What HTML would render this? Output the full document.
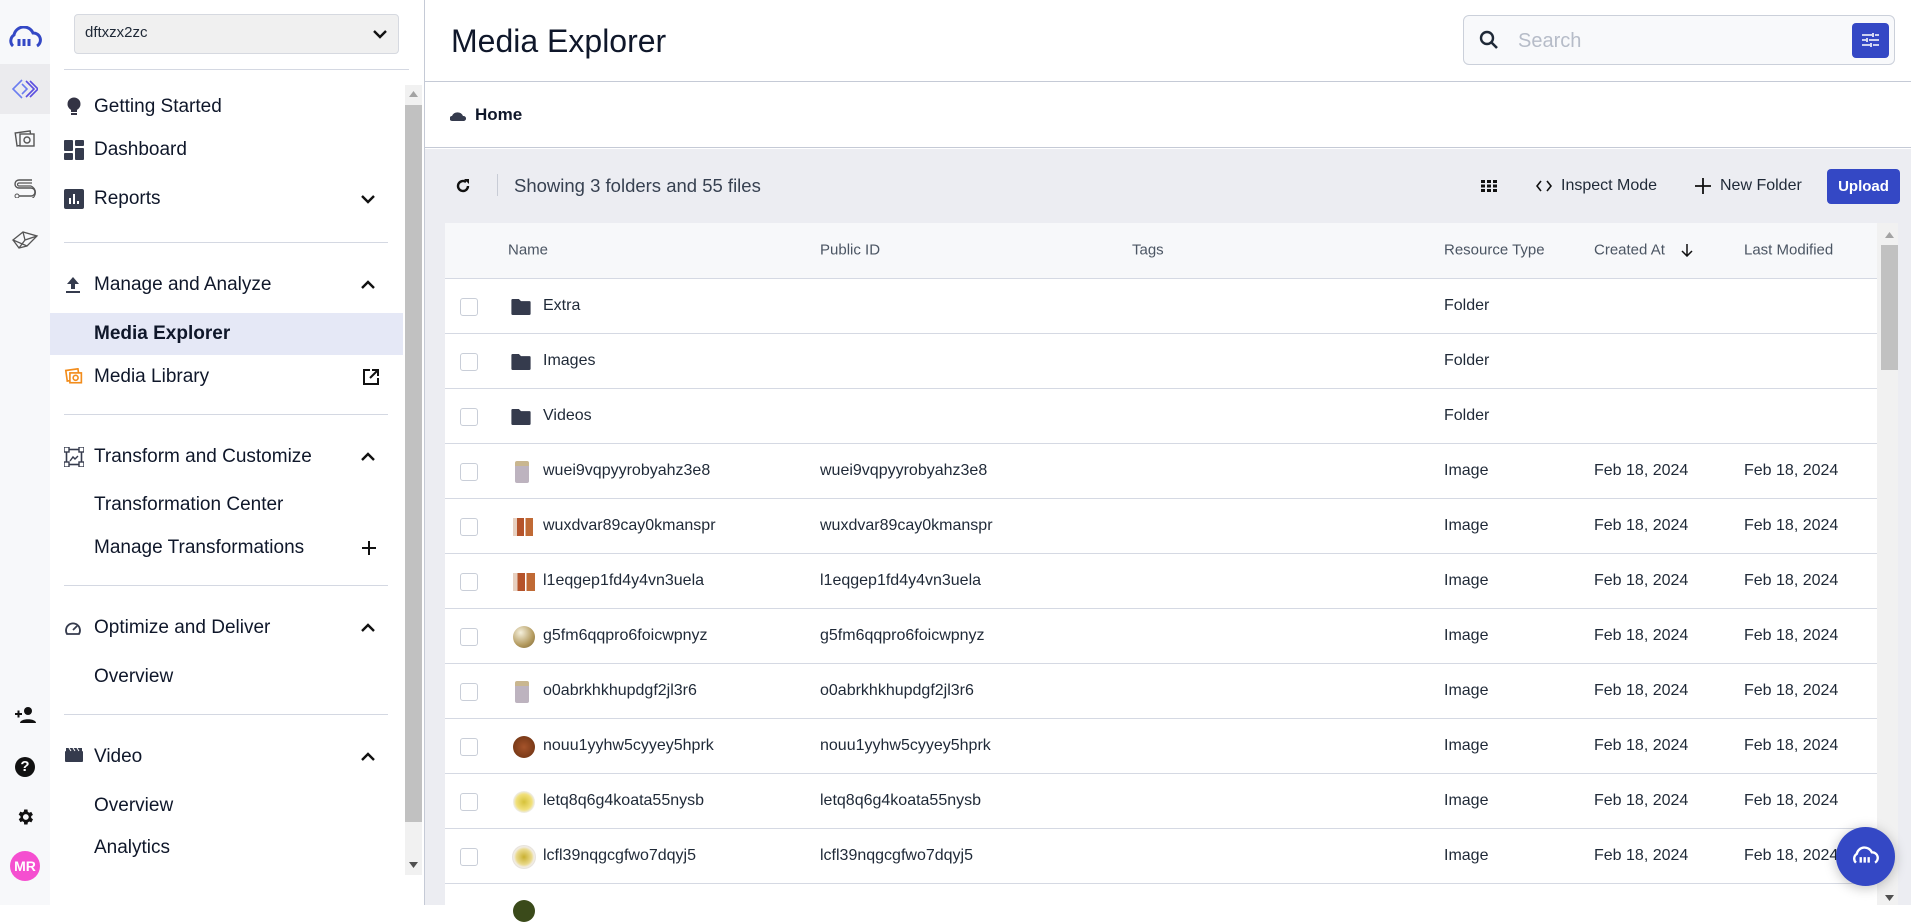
<!DOCTYPE html>
<html><head><meta charset="utf-8"><style>
*{box-sizing:border-box;margin:0;padding:0}
body{width:1911px;height:905px;overflow:hidden;font-family:"Liberation Sans",sans-serif;color:#111827;background:#fff;position:relative}
.a{position:absolute}
.rail{left:0;top:0;width:50px;height:905px;background:#f7f8fa}
.side{left:50px;top:0;width:374px;height:905px;background:#fff}
.si{position:absolute;left:94px;font-size:19px;color:#0f172a;transform:translateY(-50%)}
.ic{position:absolute;left:64px;transform:translateY(-50%)}
.chev{position:absolute;left:360px;transform:translateY(-50%)}
.div{position:absolute;left:64px;width:324px;height:1px;background:#d4d8e2}
.th{position:absolute;top:250px;transform:translateY(-50%);font-size:15px;color:#4b5563}
.row{position:absolute;left:445px;width:1432px;height:55px;border-bottom:1px solid #d5d9e3;background:#fff}
.row span{position:absolute;top:50%;transform:translateY(-50%);font-size:16px;color:#1f2937;white-space:nowrap}
.cb{position:absolute;left:15px;top:19px;width:18px;height:18px;border:1px solid #c9ced8;border-radius:3px;background:#fff}
.fi{position:absolute;left:66px;top:20px}
</style></head><body>

<div class="a rail">
  <svg class="a" style="left:8px;top:26px" width="34" height="22" viewBox="0 0 34 22"><path d="M5 20 A7 7 0 0 1 6 9 A10 10 0 0 1 25 7 A7 7 0 0 1 29 20" fill="none" stroke="#3448c5" stroke-width="3"/><path d="M11 20v-7M16 20v-7M21 20v-7" stroke="#3448c5" stroke-width="3"/></svg>
  <div class="a" style="left:0;top:64px;width:50px;height:50px;background:#ebebee"></div>
  <svg class="a" style="left:12px;top:78px" width="26" height="22" viewBox="0 0 26 22"><path d="M10 2 L1 11 L10 20 M10 6 L15 11 L10 16" fill="none" stroke="#6b7df0" stroke-width="1.6"/><path d="M14 3 L22 11 L14 19 M18 3 L26 11 L18 19" fill="none" stroke="#5b4ee0" stroke-width="1.6"/></svg>
  <svg class="a" style="left:13px;top:128px" width="24" height="22" viewBox="0 0 24 22"><rect x="3" y="4" width="15" height="13" fill="none" stroke="#555" stroke-width="1.4" transform="rotate(-8 10 10)"/><rect x="7" y="6" width="14" height="12" fill="#f7f8fa" stroke="#555" stroke-width="1.4"/><circle cx="14" cy="12" r="3" fill="none" stroke="#555" stroke-width="1.4"/></svg>
  <svg class="a" style="left:12px;top:178px" width="26" height="20" viewBox="0 0 26 20"><path d="M20 2H7a4 4 0 0 0 0 8h12a4 4 0 0 1 0 8H7" fill="none" stroke="#555" stroke-width="1.4"/><path d="M20 5H7a1.5 1.5 0 0 0 0 3h12a7 7 0 0 1 0 13" fill="none" stroke="#555" stroke-width="1.2"/><circle cx="5" cy="18" r="2" fill="none" stroke="#555"/></svg>
  <svg class="a" style="left:11px;top:228px" width="28" height="22" viewBox="0 0 28 22"><path d="M2 12 L12 4 L26 8 L16 18 Z M2 12 L8 20 L16 18 M12 4 L14 12 L26 8 M14 12 L8 20" fill="none" stroke="#555" stroke-width="1.3"/></svg>
  <svg class="a" style="left:14px;top:706px" width="22" height="18" viewBox="0 0 22 18"><circle cx="14" cy="5" r="4" fill="#111"/><path d="M6 17c0-5 16-5 16 0z" fill="#111"/><path d="M1 8h7M4.5 4.5v7" stroke="#111" stroke-width="2"/></svg>
  <div class="a" style="left:15px;top:757px;width:20px;height:20px;border-radius:50%;background:#111;color:#fff;font-weight:bold;font-size:15px;text-align:center;line-height:20px">?</div>
  <svg class="a" style="left:15px;top:807px" width="20" height="20" viewBox="0 0 24 24"><path fill="#111" d="M19.4 13a7.5 7.5 0 0 0 0-2l2.1-1.6-2-3.5-2.5 1a7 7 0 0 0-1.7-1L15 3h-4l-.4 2.6a7 7 0 0 0-1.7 1l-2.5-1-2 3.5L6.6 11a7.5 7.5 0 0 0 0 2l-2.1 1.6 2 3.5 2.5-1a7 7 0 0 0 1.7 1L11 21h4l.4-2.6a7 7 0 0 0 1.7-1l2.5 1 2-3.5zM13 15.5a3.5 3.5 0 1 1 0-7 3.5 3.5 0 0 1 0 7z"/></svg>
  <div class="a" style="left:10px;top:851px;width:30px;height:30px;border-radius:50%;background:#f54fd0;color:#fff;font-weight:bold;font-size:14px;text-align:center;line-height:30px">MR</div>
</div>

<div class="a side">
  <div class="a" style="left:24px;top:14px;width:325px;height:40px;background:#f0f0f0;border:1px solid #d6d9e0;border-radius:4px"></div>
  <div class="a" style="left:35px;top:24px;font-size:15px;color:#1f2937">dftxzx2zc</div>
  <svg class="a" style="left:322px;top:29px" width="16" height="10" viewBox="0 0 16 10"><path d="M2 2l6 6 6-6" fill="none" stroke="#111" stroke-width="2.4"/></svg>
  <div class="a" style="left:14px;top:69px;width:345px;height:1px;background:#d4d8e2"></div>
  <div class="a" style="left:355px;top:85px;width:17px;height:790px;background:#f1f1f1"></div>
  <div class="a" style="left:355px;top:105px;width:17px;height:717px;background:#c1c1c1"></div>
  <svg class="a" style="left:359px;top:91px" width="9" height="6"><path d="M0 6L4.5 0 9 6z" fill="#a3a3a3"/></svg>
  <svg class="a" style="left:359px;top:862px" width="9" height="6"><path d="M0 0L4.5 6 9 0z" fill="#505050"/></svg>
  <div class="a" style="left:374px;top:0;width:1px;height:905px;background:#c5cad6"></div>
</div>

<svg class="ic" style="top:107px;left:66px" width="16" height="20" viewBox="0 0 16 20"><circle cx="8" cy="7" r="6.5" fill="#334"/><rect x="5" y="12" width="6" height="3" fill="#334"/><rect x="5" y="16" width="6" height="2" fill="#334"/></svg>
<div class="si" style="top:107px">Getting Started</div>
<svg class="ic" style="top:150px" width="20" height="20" viewBox="0 0 20 20"><rect x="0" y="0" width="9" height="11" rx="1" fill="#353b4d"/><rect x="11" y="0" width="9" height="6" rx="1" fill="#353b4d"/><rect x="0" y="13" width="9" height="7" rx="1" fill="#353b4d"/><rect x="11" y="8" width="9" height="12" rx="1" fill="#353b4d"/></svg>
<div class="si" style="top:150px">Dashboard</div>
<svg class="ic" style="top:199px" width="20" height="20" viewBox="0 0 20 20"><rect width="20" height="20" rx="2" fill="#353b4d"/><path d="M6 15V9M10 15V5M14 15v-3" stroke="#fff" stroke-width="2"/></svg>
<div class="si" style="top:199px">Reports</div>
<svg class="chev" style="top:199px" width="16" height="10" viewBox="0 0 16 10"><path d="M2 2l6 6 6-6" fill="none" stroke="#111" stroke-width="2.4"/></svg>
<div class="div" style="top:242px"></div>
<svg class="ic" style="top:285px;left:66px" width="14" height="16" viewBox="0 0 14 16"><path d="M7 0L1 7h4v5h4V7h4z M0 14h14v2H0z" fill="#353b4d"/></svg>
<div class="si" style="top:285px">Manage and Analyze</div>
<svg class="chev" style="top:285px" width="16" height="10" viewBox="0 0 16 10"><path d="M2 8l6-6 6 6" fill="none" stroke="#111" stroke-width="2.4"/></svg>
<div class="a" style="left:50px;top:313px;width:353px;height:42px;background:#e5e8f6"></div>
<div class="si" style="top:334px;font-weight:bold">Media Explorer</div>
<svg class="ic" style="top:377px" width="20" height="18" viewBox="0 0 24 22"><rect x="3" y="2" width="15" height="13" fill="none" stroke="#f28c1b" stroke-width="2" transform="rotate(-8 10 10)"/><rect x="7" y="6" width="14" height="12" fill="#fff" stroke="#f28c1b" stroke-width="2"/><circle cx="14" cy="12" r="3" fill="none" stroke="#f28c1b" stroke-width="2"/></svg>
<div class="si" style="top:377px">Media Library</div>
<svg class="chev" style="top:377px;left:363px" width="16" height="16" viewBox="0 0 16 16"><path d="M7 1H1v14h14V9" fill="none" stroke="#111" stroke-width="2"/><path d="M9 1h6v6M15 1L7 9" fill="none" stroke="#111" stroke-width="2"/></svg>
<div class="div" style="top:414px"></div>
<svg class="ic" style="top:457px" width="20" height="20" viewBox="0 0 20 20"><rect x="2.5" y="2.5" width="15" height="15" fill="none" stroke="#353b4d" stroke-width="1.6"/><rect x="0" y="0" width="5" height="5" fill="#fff" stroke="#353b4d" stroke-width="1.4"/><rect x="15" y="0" width="5" height="5" fill="#fff" stroke="#353b4d" stroke-width="1.4"/><rect x="0" y="15" width="5" height="5" fill="#fff" stroke="#353b4d" stroke-width="1.4"/><rect x="15" y="15" width="5" height="5" fill="#fff" stroke="#353b4d" stroke-width="1.4"/><path d="M6 14l3-4 2 2 3-3" stroke="#353b4d" fill="none" stroke-width="1.4"/></svg>
<div class="si" style="top:457px">Transform and Customize</div>
<svg class="chev" style="top:457px" width="16" height="10" viewBox="0 0 16 10"><path d="M2 8l6-6 6 6" fill="none" stroke="#111" stroke-width="2.4"/></svg>
<div class="si" style="top:505px">Transformation Center</div>
<div class="si" style="top:548px">Manage Transformations</div>
<svg class="chev" style="top:548px;left:361px" width="16" height="16" viewBox="0 0 16 16"><path d="M8 1v14M1 8h14" stroke="#111" stroke-width="2"/></svg>
<div class="div" style="top:585px"></div>
<svg class="ic" style="top:628px" width="18" height="16" viewBox="0 0 18 16"><path d="M3 14A7 7 0 1 1 15 14Z" fill="none" stroke="#353b4d" stroke-width="1.8"/><path d="M9 10l4-4" stroke="#353b4d" stroke-width="1.8"/></svg>
<div class="si" style="top:628px">Optimize and Deliver</div>
<svg class="chev" style="top:628px" width="16" height="10" viewBox="0 0 16 10"><path d="M2 8l6-6 6 6" fill="none" stroke="#111" stroke-width="2.4"/></svg>
<div class="si" style="top:677px">Overview</div>
<div class="div" style="top:714px"></div>
<svg class="ic" style="top:755px;left:65px" width="18" height="14" viewBox="0 0 18 14"><rect y="3" width="18" height="11" rx="1" fill="#353b4d"/><path d="M1 0h16v3H1z" fill="#353b4d"/><path d="M4 0l2 3M8 0l2 3M12 0l2 3" stroke="#fff" stroke-width="1"/></svg>
<div class="si" style="top:757px">Video</div>
<svg class="chev" style="top:757px" width="16" height="10" viewBox="0 0 16 10"><path d="M2 8l6-6 6 6" fill="none" stroke="#111" stroke-width="2.4"/></svg>
<div class="si" style="top:806px">Overview</div>
<div class="si" style="top:848px">Analytics</div>

<!-- main -->
<div class="a" style="left:425px;top:0;width:1486px;height:82px;border-bottom:1px solid #c5cad6;background:#fff"></div>
<div class="a" style="left:451px;top:23px;font-size:32px;color:#0f172a">Media Explorer</div>
<div class="a" style="left:1463px;top:15px;width:432px;height:50px;border:1px solid #cbd0da;border-radius:6px;background:#f8f9fb"></div>
<svg class="a" style="left:1479px;top:30px" width="20" height="20" viewBox="0 0 20 20"><circle cx="8" cy="8" r="6" fill="none" stroke="#1f2937" stroke-width="2.4"/><path d="M12.5 12.5L18 18" stroke="#1f2937" stroke-width="2.6"/></svg>
<div class="a" style="left:1518px;top:30px;font-size:20px;color:#b6bcc8">Search</div>
<div class="a" style="left:1852px;top:23px;width:37px;height:35px;background:#3448c5;border-radius:4px"></div>
<svg class="a" style="left:1862px;top:32px" width="17" height="16" viewBox="0 0 17 16"><path d="M0 3h10M13 3h4M0 8h4M7 8h10M0 13h8M11 13h6M11 1v4M5 6v4M9 11v4" stroke="#fff" stroke-width="1.6"/></svg>
<div class="a" style="left:425px;top:83px;width:1486px;height:65px;border-bottom:1px solid #c5cad6;background:#fff"></div>
<svg class="a" style="left:450px;top:109px" width="16" height="12" viewBox="0 0 16 12"><path d="M2 12a2 2 0 0 1 0-5 6 6 0 0 1 11 0 2.5 2.5 0 0 1 1 5z" fill="#353b4d"/></svg>
<div class="a" style="left:475px;top:105px;font-size:17px;font-weight:bold;color:#0f172a">Home</div>
<div class="a" style="left:425px;top:149px;width:1486px;height:756px;background:#ecedf2"></div>
<svg class="a" style="left:455px;top:178px" width="16" height="16" viewBox="0 0 16 16"><path d="M13 8A5 5 0 1 1 11 4" fill="none" stroke="#111" stroke-width="2.4"/><path d="M9 1h5v5z" fill="#111"/></svg>
<div class="a" style="left:497px;top:174px;width:1px;height:22px;background:#c8ccd6"></div>
<div class="a" style="left:514px;top:175px;font-size:18.5px;color:#374151">Showing 3 folders and 55 files</div>
<svg class="a" style="left:1481px;top:180px" width="16" height="12" viewBox="0 0 16 12"><path d="M0 0h4v3H0zM6 0h4v3H6zM12 0h4v3h-4zM0 4.5h4v3H0zM6 4.5h4v3H6zM12 4.5h4v3h-4zM0 9h4v3H0zM6 9h4v3H6zM12 9h4v3h-4z" fill="#111"/></svg>
<svg class="a" style="left:1536px;top:180px" width="16" height="12" viewBox="0 0 16 12"><path d="M5 1L1 6l4 5M11 1l4 5-4 5" fill="none" stroke="#111" stroke-width="1.6"/></svg>
<div class="a" style="left:1561px;top:177px;font-size:16px;color:#1f2937">Inspect Mode</div>
<svg class="a" style="left:1695px;top:178px" width="16" height="16" viewBox="0 0 16 16"><path d="M8 0v16M0 8h16" stroke="#111" stroke-width="1.8"/></svg>
<div class="a" style="left:1720px;top:177px;font-size:16px;color:#1f2937">New Folder</div>
<div class="a" style="left:1827px;top:169px;width:73px;height:35px;background:#3448c5;border-radius:4px;color:#fff;font-weight:bold;font-size:15px;text-align:center;line-height:35px">Upload</div>

<div class="a" style="left:445px;top:223px;width:1432px;height:56px;background:#f7f8fa;border-bottom:1px solid #d5d9e3"></div>
<div class="th" style="left:508px">Name</div>
<div class="th" style="left:820px">Public ID</div>
<div class="th" style="left:1132px">Tags</div>
<div class="th" style="left:1444px">Resource Type</div>
<div class="th" style="left:1594px">Created At</div>
<svg class="a" style="left:1681px;top:244px" width="12" height="13" viewBox="0 0 12 13"><path d="M6 0v12M1 7l5 5 5-5" fill="none" stroke="#111" stroke-width="1.5"/></svg>
<div class="th" style="left:1744px">Last Modified</div>
<div class="a" style="left:1877px;top:223px;width:21px;height:682px;background:#f1f1f1"></div>
<div class="a" style="left:1881px;top:245px;width:17px;height:125px;background:#c1c1c1"></div>
<svg class="a" style="left:1885px;top:232px" width="9" height="6"><path d="M0 6L4.5 0 9 6z" fill="#a3a3a3"/></svg>
<svg class="a" style="left:1885px;top:895px" width="9" height="6"><path d="M0 0L4.5 6 9 0z" fill="#505050"/></svg>

<div class="row" style="top:279px"><div class="cb"></div><svg class="fi" width="20" height="16" viewBox="0 0 18 15"><path d="M0 1a1 1 0 0 1 1-1h6l2 2h8a1 1 0 0 1 1 1v11a1 1 0 0 1-1 1H1a1 1 0 0 1-1-1z" fill="#353b4d"/></svg><span style="left:98px">Extra</span><span style="left:999px">Folder</span></div>
<div class="row" style="top:334px"><div class="cb"></div><svg class="fi" width="20" height="16" viewBox="0 0 18 15"><path d="M0 1a1 1 0 0 1 1-1h6l2 2h8a1 1 0 0 1 1 1v11a1 1 0 0 1-1 1H1a1 1 0 0 1-1-1z" fill="#353b4d"/></svg><span style="left:98px">Images</span><span style="left:999px">Folder</span></div>
<div class="row" style="top:389px"><div class="cb"></div><svg class="fi" width="20" height="16" viewBox="0 0 18 15"><path d="M0 1a1 1 0 0 1 1-1h6l2 2h8a1 1 0 0 1 1 1v11a1 1 0 0 1-1 1H1a1 1 0 0 1-1-1z" fill="#353b4d"/></svg><span style="left:98px">Videos</span><span style="left:999px">Folder</span></div>

<div class="row" style="top:444px"><div class="cb"></div><div class="a" style="left:70px;top:17px;width:14px;height:22px;background:#bdb3bf;border-radius:2px;border-top:5px solid #c9b68f"></div><span style="left:98px">wuei9vqpyyrobyahz3e8</span><span style="left:375px">wuei9vqpyyrobyahz3e8</span><span style="left:999px">Image</span><span style="left:1149px">Feb 18, 2024</span><span style="left:1299px">Feb 18, 2024</span></div>
<div class="row" style="top:499px"><div class="cb"></div><div class="a" style="left:68px;top:19px;width:20px;height:18px;background:linear-gradient(90deg,#e7d0c0 0 20%,#b5532a 20% 55%,#fff 55% 62%,#c06a35 62%)"></div><span style="left:98px">wuxdvar89cay0kmanspr</span><span style="left:375px">wuxdvar89cay0kmanspr</span><span style="left:999px">Image</span><span style="left:1149px">Feb 18, 2024</span><span style="left:1299px">Feb 18, 2024</span></div>
<div class="row" style="top:554px"><div class="cb"></div><div class="a" style="left:68px;top:19px;width:22px;height:18px;background:linear-gradient(90deg,#e7d0c0 0 20%,#b5532a 20% 55%,#fff 55% 62%,#c06a35 62%)"></div><span style="left:98px">l1eqgep1fd4y4vn3uela</span><span style="left:375px">l1eqgep1fd4y4vn3uela</span><span style="left:999px">Image</span><span style="left:1149px">Feb 18, 2024</span><span style="left:1299px">Feb 18, 2024</span></div>
<div class="row" style="top:609px"><div class="cb"></div><div class="a" style="left:68px;top:17px;width:22px;height:22px;border-radius:50%;background:radial-gradient(circle at 35% 30%,#f5f0dc,#b39a5e 60%,#7a6434)"></div><span style="left:98px">g5fm6qqpro6foicwpnyz</span><span style="left:375px">g5fm6qqpro6foicwpnyz</span><span style="left:999px">Image</span><span style="left:1149px">Feb 18, 2024</span><span style="left:1299px">Feb 18, 2024</span></div>
<div class="row" style="top:664px"><div class="cb"></div><div class="a" style="left:70px;top:17px;width:14px;height:22px;background:#bdb3bf;border-radius:2px;border-top:5px solid #c9b68f"></div><span style="left:98px">o0abrkhkhupdgf2jl3r6</span><span style="left:375px">o0abrkhkhupdgf2jl3r6</span><span style="left:999px">Image</span><span style="left:1149px">Feb 18, 2024</span><span style="left:1299px">Feb 18, 2024</span></div>
<div class="row" style="top:719px"><div class="cb"></div><div class="a" style="left:68px;top:17px;width:22px;height:22px;border-radius:50%;background:radial-gradient(circle,#a5532a,#7a3a18 70%,#5a6a2a)"></div><span style="left:98px">nouu1yyhw5cyyey5hprk</span><span style="left:375px">nouu1yyhw5cyyey5hprk</span><span style="left:999px">Image</span><span style="left:1149px">Feb 18, 2024</span><span style="left:1299px">Feb 18, 2024</span></div>
<div class="row" style="top:774px"><div class="cb"></div><div class="a" style="left:68px;top:17px;width:22px;height:22px;border-radius:50%;background:radial-gradient(circle,#d6c23a,#f1e07a 50%,#eee 70%,#c44 80%,#eee)"></div><span style="left:98px">letq8q6g4koata55nysb</span><span style="left:375px">letq8q6g4koata55nysb</span><span style="left:999px">Image</span><span style="left:1149px">Feb 18, 2024</span><span style="left:1299px">Feb 18, 2024</span></div>
<div class="row" style="top:829px"><div class="cb"></div><div class="a" style="left:67px;top:16px;width:24px;height:24px;border-radius:50%;background:radial-gradient(circle,#c9b030,#e9d98a 45%,#f2ede4 60%,#bbb)"></div><span style="left:98px">lcfl39nqgcgfwo7dqyj5</span><span style="left:375px">lcfl39nqgcgfwo7dqyj5</span><span style="left:999px">Image</span><span style="left:1149px">Feb 18, 2024</span><span style="left:1299px">Feb 18, 2024</span></div>
<div class="row" style="top:884px;height:30px;border:none"><div class="a" style="left:68px;top:16px;width:22px;height:22px;border-radius:50%;background:#3a4a1a"></div></div>

<div class="a" style="left:1836px;top:827px;width:59px;height:59px;border-radius:50%;background:#3448c5;box-shadow:0 2px 12px rgba(0,0,0,.25)"></div>
<svg class="a" style="left:1852px;top:846px" width="27" height="19" viewBox="0 0 34 22"><path d="M5 20 A7 7 0 0 1 6 9 A10 10 0 0 1 25 7 A7 7 0 0 1 29 20" fill="none" stroke="#fff" stroke-width="3"/><path d="M11 20v-7M16 20v-7M21 20v-7" stroke="#fff" stroke-width="3"/></svg>
</body></html>
